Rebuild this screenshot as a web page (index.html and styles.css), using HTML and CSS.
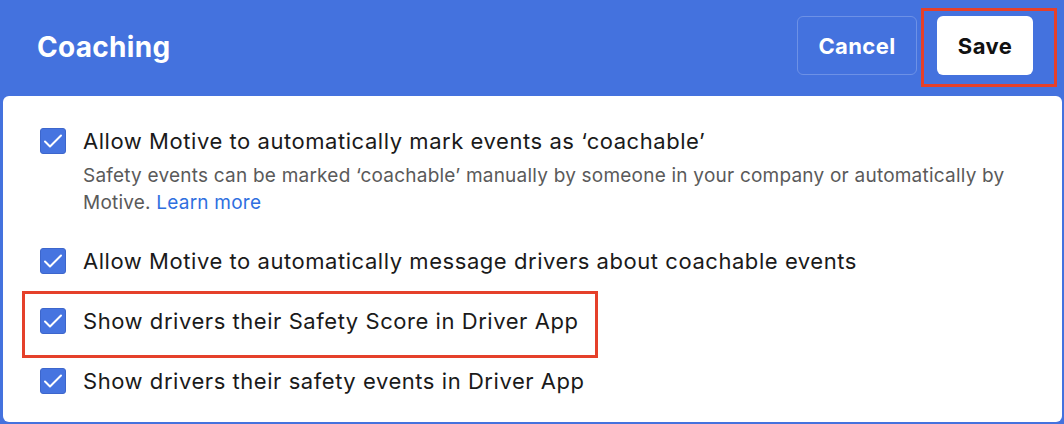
FILE: index.html
```html
<!DOCTYPE html>
<html lang="en">
<head>
  <meta charset="UTF-8" />
  <title>Coaching</title>
  <link rel="stylesheet" href="styles.css">
</head>
<body>

<div class="header">
  <h1>Coaching</h1>
  <div class="actions">
    <button class="btn-cancel">Cancel</button>
    <span class="mark mark-save">
      <button class="btn-save">Save</button>
    </span>
  </div>
</div>

<div class="panel">
  <div class="option">
    <span class="check"><svg viewBox="1 1 24 24"><path d="M5 13.5l5 5L21 7.5"/></svg></span>
    <div class="text">
      <div class="label">Allow Motive to automatically mark events as ‘coachable’</div>
      <div class="desc">Safety events can be marked ‘coachable’ manually by someone in your company or automatically by Motive. <a href="#">Learn more</a></div>
    </div>
  </div>

  <div class="option">
    <span class="check"><svg viewBox="1 1 24 24"><path d="M5 13.5l5 5L21 7.5"/></svg></span>
    <div class="text">
      <div class="label">Allow Motive to automatically message drivers about coachable events</div>
    </div>
  </div>

  <div class="option mark-row">
    <span class="check"><svg viewBox="1 1 24 24"><path d="M5 13.5l5 5L21 7.5"/></svg></span>
    <div class="text">
      <div class="label">Show drivers their Safety Score in Driver App</div>
    </div>
  </div>

  <div class="option">
    <span class="check"><svg viewBox="1 1 24 24"><path d="M5 13.5l5 5L21 7.5"/></svg></span>
    <div class="text">
      <div class="label">Show drivers their safety events in Driver App</div>
    </div>
  </div>
</div>

</body>
</html>
```

FILE: styles.css
```css
body {
  margin: 0;
  padding: 0;
  background: #4472de;
  font-family: Inter, "Noto Sans", sans-serif;
  color: #1a1a1a;
  height: 424px;
  overflow: hidden;
}

.header {
  height: 96px;
  display: flex;
  align-items: center;
  justify-content: space-between;
  padding: 0 31px 0 37px;
  box-sizing: border-box;
}

.header h1 {
  margin: 0;
  color: white;
  font-size: 28px;
  font-weight: 700;
  letter-spacing: 0.3px;
  margin-top: -3px;
}

.actions {
  display: flex;
  align-items: center;
  gap: 20px;
  margin-top: -5px;
}

.actions button {
  height: 59px;
  border-radius: 6px;
  font-family: inherit;
  font-size: 22px;
  font-weight: 700;
  letter-spacing: 0.4px;
  cursor: pointer;
}

.btn-cancel {
  width: 120px;
  background: transparent;
  color: white;
  border: 1px solid #6d91e6;
}

.btn-save {
  width: 96px;
  background: white;
  color: #111;
  border: none;
  display: block;
}

/* red annotation boxes */
.mark {
  position: relative;
  display: block;
}

.mark::after {
  content: "";
  position: absolute;
  border: 3px solid #e5402a;
  pointer-events: none;
}

.mark-save::after {
  top: -8px;
  bottom: -12px;
  left: -16px;
  right: -24px;
}

.mark-row {
  position: relative;
}

.mark-row::after {
  content: "";
  position: absolute;
  top: -17px;
  bottom: -24px;
  left: -18px;
  right: 464px;
  border: 3px solid #e5402a;
  pointer-events: none;
}

.panel {
  background: white;
  margin: 0 2px 0 3px;
  height: 326px;
  border-radius: 6px;
  padding: 32px 0 0 37px;
  box-sizing: border-box;
}

.option {
  display: flex;
  align-items: flex-start;
  gap: 17px;
  margin-bottom: 34px;
}

.check {
  width: 26px;
  height: 26px;
  flex: none;
  background: #4674e0;
  border: 1px solid #3d66cc;
  border-radius: 3px;
  box-sizing: border-box;
  display: flex;
}

.check svg {
  width: 24px;
  height: 24px;
}

.check path {
  fill: none;
  stroke: white;
  stroke-width: 2;
  stroke-linecap: round;
  stroke-linejoin: round;
}

.label {
  font-size: 22px;
  line-height: 26px;
  letter-spacing: 0.55px;
}

.desc {
  font-size: 19px;
  line-height: 27px;
  letter-spacing: 0.22px;
  color: #5a5a5a;
  margin-top: 8px;
  margin-bottom: -2px;
  padding-right: 40px;
}

.desc a {
  color: #2f6fe0;
  text-decoration: none;
}
```
